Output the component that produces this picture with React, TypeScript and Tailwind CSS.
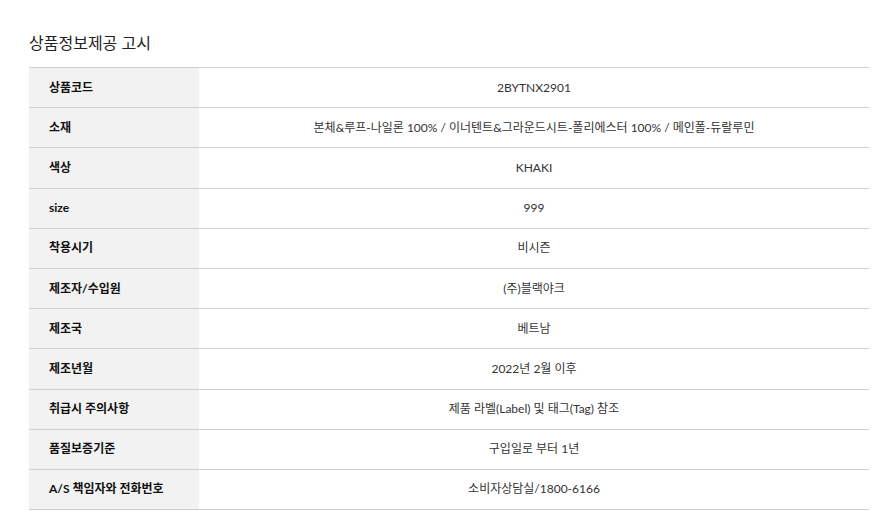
import React from "react";

const rows: [string, string][] = [
  ["상품코드", "2BYTNX2901"],
  ["소재", "본체&루프-나일론 100% / 이너텐트&그라운드시트-폴리에스터 100% / 메인폴-듀랄루민"],
  ["색상", "KHAKI"],
  ["size", "999"],
  ["착용시기", "비시즌"],
  ["제조자/수입원", "(주)블랙야크"],
  ["제조국", "베트남"],
  ["제조년월", "2022년 2월 이후"],
  ["취급시 주의사항", "제품 라벨(Label) 및 태그(Tag) 참조"],
  ["품질보증기준", "구입일로 부터 1년"],
  ["A/S 책임자와 전화번호", "소비자상담실/1800-6166"],
];

export default function App() {
  return (
    <div
      className="w-[888px] h-[532px] bg-white pl-[29px] pr-[19px] pt-[31px]"
      style={{ fontFamily: 'Lato, "Noto Sans CJK KR", sans-serif' }}
    >
      <h2 className="text-[16px] leading-[23px] text-[#222] h-[36px]">상품정보제공 고시</h2>
      <div className="border-t border-[#d0d0d0]">
        {rows.map(([k, v]) => (
          <div key={k} className="flex h-[40.2px] border-b border-[#d0d0d0]">
            <div className="w-[170px] bg-[#f2f2f2] pl-[20px] flex items-center text-[12px] font-bold text-[#111]">
              {k}
            </div>
            <div className="flex-1 flex items-center justify-center text-[12px] text-[#333]">
              {v}
            </div>
          </div>
        ))}
      </div>
    </div>
  );
}
